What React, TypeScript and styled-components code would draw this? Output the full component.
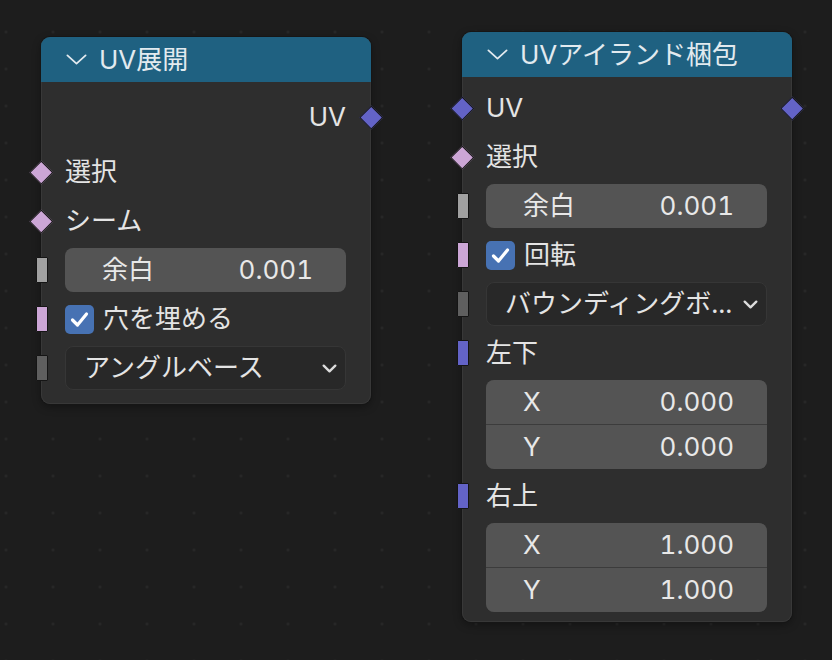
import React from "react";
import styled, { createGlobalStyle } from "styled-components";

const GlobalStyle = createGlobalStyle`
  html, body { margin: 0; padding: 0; background: #1d1d1d; }
  body {
    font-family: "Inter", "Noto Sans CJK JP", sans-serif;
    font-variant-numeric: tabular-nums;
  }
`;

const Canvas = styled.div`
  position: relative;
  width: 832px;
  height: 660px;
  overflow: hidden;
  background-color: #1d1d1d;
  background-image: radial-gradient(circle, #2a2a2a 0.9px, transparent 1.6px);
  background-size: 47px 37px;
  background-position: 29.5px 13.5px;
`;

const NodeBox = styled.div<{ $x: number; $y: number }>`
  position: absolute;
  left: ${(p) => p.$x}px;
  top: ${(p) => p.$y}px;
  width: 330px;
  background: #2e2e2e;
  border-radius: 9px;
  box-shadow: 0 0 0 1px #161616, inset 0 0 0 1px #383838, 0 3px 8px rgba(0, 0, 0, 0.35);
  color: #e4e4e4;
  font-size: 26px;
`;

const Header = styled.div`
  height: 45px;
  display: flex;
  align-items: center;
  gap: 12px;
  padding-left: 25px;
  background: #1f6181;
  border-radius: 9px 9px 0 0;
  color: #e2eaef;
  font-size: 26px;
  line-height: 1;
`;

const Body = styled.div<{ $top: number; $bottom: number }>`
  display: flex;
  flex-direction: column;
  gap: 5px;
  padding: ${(p) => p.$top}px 25px ${(p) => p.$bottom}px 24px;
`;

const Row = styled.div<{ $end?: boolean; $extra?: number }>`
  position: relative;
  height: 44px;
  display: flex;
  align-items: center;
  justify-content: ${(p) => (p.$end ? "flex-end" : "flex-start")};
  margin-bottom: ${(p) => p.$extra ?? 0}px;
  line-height: 1;
  white-space: nowrap;
`;

const Diamond = styled.span<{ $color: string; $side: "in" | "out" }>`
  position: absolute;
  top: 50%;
  ${(p) => (p.$side === "in" ? "left: -24px;" : "right: -25px;")}
  width: 16.5px;
  height: 16.5px;
  margin-top: -8.25px;
  margin-left: ${(p) => (p.$side === "in" ? "-8.25px" : "0")};
  margin-right: ${(p) => (p.$side === "out" ? "-8.25px" : "0")};
  background: ${(p) => p.$color};
  border: 1.5px solid #161616;
  transform: rotate(45deg);
  box-sizing: border-box;
`;

const RectSocket = styled.span<{ $color: string }>`
  position: absolute;
  top: 50%;
  left: -24px;
  width: 12px;
  height: 26px;
  margin-top: -13px;
  margin-left: -5.5px;
  background: ${(p) => p.$color};
  border: 1px solid #151515;
  border-radius: 1px;
  box-sizing: border-box;
`;

const Label = styled.span``;

const NumField = styled.div`
  height: 44px;
  display: flex;
  align-items: center;
  justify-content: space-between;
  padding: 0 33px 0 37px;
  background: #545454;
  line-height: 1;
  color: #e8e8e8;
`;

const SingleField = styled(NumField)`
  border-radius: 8px;
`;

const VectorBox = styled.div`
  display: flex;
  flex-direction: column;
  gap: 1px;
  background: #3c3c3c;
  border-radius: 8px;
  overflow: hidden;
`;

const FieldWrap = styled.div`
  position: relative;
`;

const CheckBox = styled.span`
  width: 29px;
  height: 29px;
  border-radius: 5px;
  background: #4772b3;
  display: inline-flex;
  align-items: center;
  justify-content: center;
  margin-right: 9px;
  flex: none;
`;

const Dropdown = styled.div`
  position: relative;
  height: 44px;
  box-sizing: border-box;
  display: flex;
  align-items: center;
  justify-content: space-between;
  padding: 0 8px 0 18px;
  background: #282828;
  border: 1px solid #363636;
  border-radius: 8px;
  line-height: 1;
  white-space: nowrap;
`;

const Chevron = ({ w = 20, h = 10, sw = 2 }: { w?: number; h?: number; sw?: number }) => (
  <svg width={w} height={h} viewBox={`0 0 ${w} ${h}`} fill="none" style={{ flex: "none" }}>
    <path
      d={`M ${sw / 2 + 0.5} ${sw / 2 + 0.5} L ${w / 2} ${h - sw / 2 - 0.5} L ${w - sw / 2 - 0.5} ${sw / 2 + 0.5}`}
      stroke="currentColor"
      strokeWidth={sw}
      strokeLinecap="round"
      strokeLinejoin="round"
    />
  </svg>
);

const Check = () => (
  <svg width="29" height="29" viewBox="0 0 29 29" fill="none">
    <path d="M7.5 15 L12.5 20 L21.5 9" stroke="#fff" strokeWidth="3.2" strokeLinecap="round" strokeLinejoin="round" />
  </svg>
);

const DropChevron = styled.span`
  display: inline-flex;
  color: #dcdcdc;
`;

const C = {
  vector: "#6363c7",
  bool: "#cca6d6",
  float: "#a1a1a1",
  menu: "#5f5f5f",
};

export default function App() {
  return (
    <>
      <GlobalStyle />
      <Canvas>
        <NodeBox $x={41} $y={37}>
          <Header>
            <Chevron w={21} h={11} sw={1.8} />
            <span>UV展開</span>
          </Header>
          <Body $top={13} $bottom={14}>
            <Row $end $extra={6}>
              <Label>UV</Label>
              <Diamond $color={C.vector} $side="out" />
            </Row>
            <Row>
              <Diamond $color={C.bool} $side="in" />
              <Label>選択</Label>
            </Row>
            <Row>
              <Diamond $color={C.bool} $side="in" />
              <Label>シーム</Label>
            </Row>
            <FieldWrap>
              <RectSocket $color={C.float} />
              <SingleField>
                <span>余白</span>
                <span>0.001</span>
              </SingleField>
            </FieldWrap>
            <Row>
              <RectSocket $color={C.bool} />
              <CheckBox>
                <Check />
              </CheckBox>
              <Label>穴を埋める</Label>
            </Row>
            <FieldWrap>
              <RectSocket $color={C.menu} />
              <Dropdown>
                <span>アングルベース</span>
                <DropChevron>
                  <Chevron w={15} h={9} sw={2.4} />
                </DropChevron>
              </Dropdown>
            </FieldWrap>
          </Body>
        </NodeBox>

        <NodeBox $x={462} $y={32}>
          <Header>
            <Chevron w={21} h={11} sw={1.8} />
            <span>UVアイランド梱包</span>
          </Header>
          <Body $top={9} $bottom={10}>
            <Row>
              <Diamond $color={C.vector} $side="in" />
              <Label>UV</Label>
              <Diamond $color={C.vector} $side="out" />
            </Row>
            <Row>
              <Diamond $color={C.bool} $side="in" />
              <Label>選択</Label>
            </Row>
            <FieldWrap>
              <RectSocket $color={C.float} />
              <SingleField>
                <span>余白</span>
                <span>0.001</span>
              </SingleField>
            </FieldWrap>
            <Row>
              <RectSocket $color={C.bool} />
              <CheckBox>
                <Check />
              </CheckBox>
              <Label>回転</Label>
            </Row>
            <FieldWrap>
              <RectSocket $color={C.menu} />
              <Dropdown>
                <span>バウンディングボ...</span>
                <DropChevron>
                  <Chevron w={15} h={9} sw={2.4} />
                </DropChevron>
              </Dropdown>
            </FieldWrap>
            <Row>
              <RectSocket $color={C.vector} />
              <Label>左下</Label>
            </Row>
            <VectorBox>
              <NumField>
                <span>X</span>
                <span>0.000</span>
              </NumField>
              <NumField>
                <span>Y</span>
                <span>0.000</span>
              </NumField>
            </VectorBox>
            <Row>
              <RectSocket $color={C.vector} />
              <Label>右上</Label>
            </Row>
            <VectorBox>
              <NumField>
                <span>X</span>
                <span>1.000</span>
              </NumField>
              <NumField>
                <span>Y</span>
                <span>1.000</span>
              </NumField>
            </VectorBox>
          </Body>
        </NodeBox>
      </Canvas>
    </>
  );
}
